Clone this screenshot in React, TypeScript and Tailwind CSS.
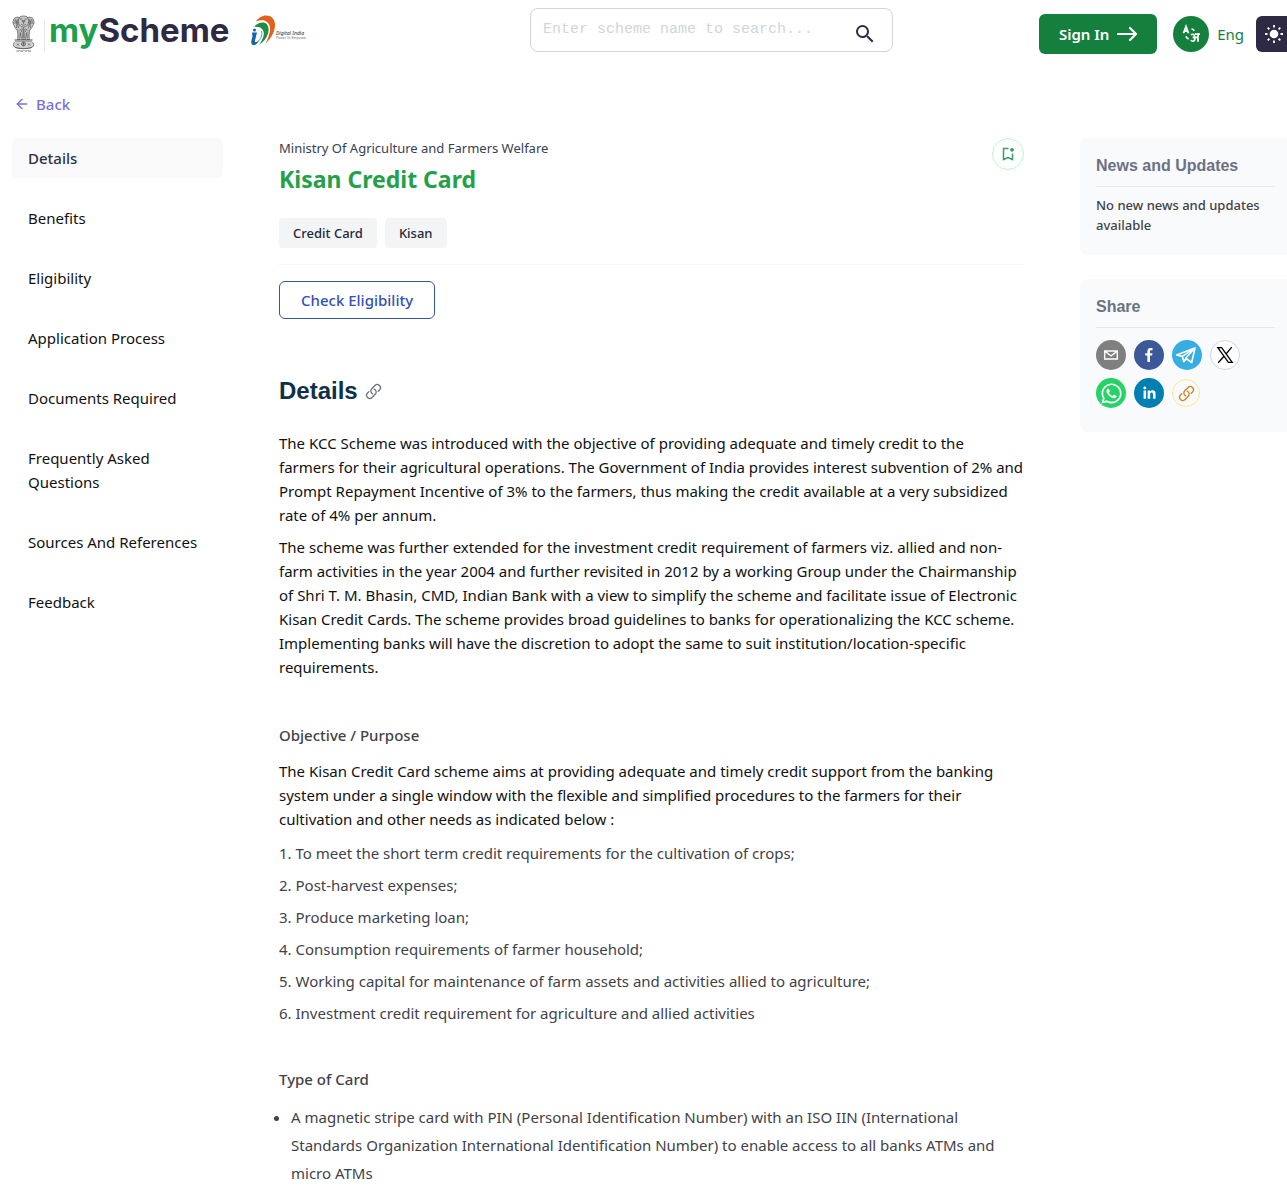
import type { ReactNode } from "react";
import { ArrowLeft } from "lucide-react";
import { MdSearch } from "react-icons/md";
import { FaWhatsapp } from "react-icons/fa6";
import { HiOutlineLink } from "react-icons/hi2";

function Emblem() {
  return (
    <svg viewBox="0 0 46 76" className="h-[38px] w-[23px]" fill="none" stroke="#4a4a4a" strokeWidth="1.3" role="img" aria-label="National emblem">
      <path d="M15 5c1-4 15-4 16 0 5-2 11 0 12 5 2 4 1 9-2 12-1 5-4 7-7 8H12c-4-1-6-3-7-8-3-3-4-8-2-12 1-5 7-7 12-5z" fill="#c9c9c9" />
      <path d="M15 5c-3 5-3 12 1 17M31 5c3 5 3 12-1 17M16 8h5m4 0h5M19 12h8M21 10l2 7 2-7M18 18c3 3 7 3 10 0M17 22c4 3 8 3 12 0M4 12h5m-6 4h7M42 12h-5m6 4h-7M7 8c3 6 3 12 2 18M39 8c-3 6-3 12-2 18M12 7c-2 7-1 14 2 20M34 7c2 7 1 14-2 20" />
      <path d="M10 29c2 7 2 14 1 20h5l1-14 2 14h8l2-14 1 14h5c-1-6-1-13 1-20M20 27l1 20M26 27l-1 20M23 25v22M14 30v17M32 30v17M17 28l2 6M29 28l-2 6" fill="#dedede" />
      <path d="M5 50h36M6 54h34" strokeWidth="2" />
      <path d="M5 54c-3 3-3 8 0 10 6 4 30 4 36 0 3-2 3-7 0-10" fill="#d2d2d2" />
      <circle cx="23" cy="58" r="4" />
      <path d="M23 54v8M19 58h8M10 57l4 4m-4 0 4-4M32 57l4 4m-4 0 4-4M6 65c8 3 26 3 34 0" />
      <path d="M9 73h5m2 0h6m4 0h4m2 0h6M9 71h29" strokeWidth="1.2" stroke="#8a8a8a" />
    </svg>
  );
}

function DigitalIndia() {
  return (
    <svg viewBox="0 0 110 64" className="h-8 w-[55px] shrink-0" role="img" aria-label="Digital India, Power To Empower">
      <path d="M10 13C17 1 34-3 43 6c10 10 5 34-14 51 9-17 13-34 4-42-6-6-15-5-23-2z" fill="#e2611d" />
      <path d="M6 24c7-9 20-12 26-5 8 10 1 30-16 41 8-11 13-24 7-31-4-5-11-6-17-5z" fill="#1d8f43" />
      <circle cx="7" cy="30" r="3" fill="#1e5aa8" />
      <path d="M2 35h10L8 51c-1 4 2 5 8-1-2 8-10 13-14 9-3-3-1-9 1-16z" fill="#1565ab" />
      <path d="M15 52c6-6 8-14 6-20" stroke="#3b9bd4" strokeWidth="2" fill="none" />
      <text x="50" y="40" fontSize="10" fontStyle="italic" fontWeight="500" fill="#444444" className="font-['Noto_Sans',sans-serif]">Digital India</text>
      <text x="50" y="47" fontSize="7" fill="#777777" className="font-['Liberation_Sans',sans-serif]">Power To Empower</text>
    </svg>
  );
}

function TranslateIcon() {
  return (
    <svg viewBox="0 0 20 20" className="size-5" fill="none" stroke="#ffffff" strokeWidth="1.8">
      <path d="M2.500 9.200 5 2.500l2.500 6.700M3.400 7h3.300" />
      <path d="M10.500 5c1.300 0 2.200.6 2.600 1.900M5.200 12c.1 1.600 1 2.600 2.600 2.800" strokeWidth="1.600" />
      <path d="M10 11c.8-1.200 3.500-1 3.500.9 0 1.100-1 1.500-1.900 1.500 1.400 0 2.400.7 2.300 2-.1 2-3.300 2.200-4 .6M13.500 13.300h3.500M14 10.200h5M17 10.200v7.600" strokeWidth="1.700" />
    </svg>
  );
}

function SunIcon() {
  return (
    <svg viewBox="0 0 18 18" className="size-[18px]" stroke="currentColor" strokeWidth="1.800" fill="none">
      <circle cx="9" cy="9" r="4.300" fill="currentColor" stroke="none" />
      <path d="M9 0v2.500M9 15.500V18M0 9h2.500M15.500 9H18M2.700 2.700l1.700 1.700M13.600 13.600l1.700 1.700M2.700 15.300l1.700-1.700M13.600 4.400l1.700-1.700" />
    </svg>
  );
}

const navItems = [
  "Details", "Benefits", "Eligibility", "Application Process", "Documents Required",
  "Frequently Asked Questions", "Sources And References", "Feedback",
];

const purposes = [
  "To meet the short term credit requirements for the cultivation of crops;",
  "Post-harvest expenses;",
  "Produce marketing loan;",
  "Consumption requirements of farmer household;",
  "Working capital for maintenance of farm assets and activities allied to agriculture;",
  "Investment credit requirement for agriculture and allied activities",
];

function Glyph({ children }: { children: ReactNode }) {
  return <svg viewBox="0 0 64 64" className="size-full" fill="#ffffff">{children}</svg>;
}

const round = "flex size-[30px] items-center justify-center rounded-full";

function ShareCard() {
  return (
    <section className="rounded-l-lg bg-[#f9fafc] pt-4 pr-3 pb-6 pl-4">
      <h2 className="border-b border-gray-200 pb-2 font-['Liberation_Sans',sans-serif] text-base font-bold text-gray-500">Share</h2>
      <div className="mt-3 flex w-[152px] flex-wrap gap-2">
        <button aria-label="Share by email" className={`${round} bg-[#7f7f7f]`}>
          <Glyph><path fillRule="evenodd" d="M17 22v20h30V22H17zm24.100 3L32 32.100 22.900 25h18.200zM20 39V26.600l12 9.300 12-9.300V39H20z" /></Glyph>
        </button>
        <button aria-label="Share on Facebook" className={`${round} bg-[#3b5998]`}>
          <Glyph><path d="M34.100,47V33.300h4.600l0.700-5.300h-5.300v-3.400c0-1.500,0.400-2.600,2.600-2.600l2.800,0v-4.800c-0.500-0.100-2.200-0.200-4.100-0.200c-4.100,0-6.900,2.500-6.900,7V28H24v5.300h4.500V47H34.100z" /></Glyph>
        </button>
        <button aria-label="Share on Telegram" className={`${round} bg-[#37aee2]`}>
          <Glyph>
            <path d="M10 32 49 17 42 48 31 40 25 46 22 35Z" fill="none" stroke="#ffffff" strokeWidth="3.500" strokeLinejoin="round" />
            <path d="M22 35 48 18 29 39M25 46l5-7" fill="none" stroke="#ffffff" strokeWidth="3" />
          </Glyph>
        </button>
        <button aria-label="Share on X" className={`${round} border border-gray-300 bg-white text-black`}>
          <svg viewBox="0 0 18 18" className="size-[18px]" fill="none" stroke="currentColor" strokeWidth="1.300">
            <path d="M1.800 1.700h3.800l10.600 14.600h-3.800zM15.800 1.200 10 8M8 10.300 2.200 16.800" />
          </svg>
        </button>
        <button aria-label="Share on WhatsApp" className={`${round} bg-[#25d366] text-white`}>
          <FaWhatsapp size={23} />
        </button>
        <button aria-label="Share on LinkedIn" className={`${round} bg-[#007fb1]`}>
          <Glyph><path d="M20.400,44h5.400V26.600h-5.400V44z M23.100,18c-1.700,0-3.100,1.400-3.100,3.100c0,1.700,1.400,3.100,3.100,3.100c1.700,0,3.100-1.400,3.100-3.100C26.200,19.400,24.800,18,23.100,18z M39.500,26.200c-2.600,0-4.400,1.400-5.100,2.800h-0.100v-2.400h-5.200V44h5.400v-8.600c0-2.300,0.400-4.500,3.200-4.500c2.800,0,2.800,2.600,2.800,4.600V44H46v-9.500C46,29.800,45,26.200,39.500,26.200z" /></Glyph>
        </button>
        <button aria-label="Copy link" className="mt-px flex size-7 items-center justify-center rounded-full border border-amber-200 text-[#d0802b]">
          <HiOutlineLink size={17} strokeWidth={1.9} />
        </button>
      </div>
    </section>
  );
}

export default function App() {
  return (
    <div className="min-h-screen overflow-x-hidden bg-white font-['Noto_Sans',sans-serif] text-[15px] leading-6 text-[#111111]">
      <header className="grid grid-cols-[1fr_363px_394px] pt-2">
        <div className="flex items-start pl-3">
          <div className="mt-[7px] flex">
            <Emblem />
            <span className="mt-1 ml-[9px] h-8 w-px bg-gray-200" />
          </div>
          <a href="#home" className="ml-1 font-['Inter',sans-serif] text-[33px] leading-[44px] font-bold text-[#2f2a44]">
            <span className="text-[#1ca04c]">my</span>Scheme
          </a>
          <div className="mt-[7px] ml-[22px]"><DigitalIndia /></div>
        </div>
        <div className="flex h-11 items-center rounded-lg border border-gray-300 pr-[15px] pl-3">
          <input
            type="text"
            aria-label="Search schemes"
            placeholder="Enter scheme name to search..."
            className="min-w-0 flex-1 font-['Liberation_Mono',monospace] text-[15px] outline-none placeholder:text-gray-300"
          />
          <button aria-label="Search" className="mt-2 text-[#2f2a44]"><MdSearch size={24} /></button>
        </div>
        <div className="flex items-start justify-end">
          <button className="mt-[6px] flex h-10 w-[118px] items-center justify-center gap-2 rounded-md bg-[#15803d] font-semibold text-white">
            Sign In
            <svg viewBox="0 0 20 16" className="h-4 w-5" fill="none" stroke="currentColor" strokeWidth="2.200" strokeLinecap="round" strokeLinejoin="round">
              <path d="M1 8h18M13 2l6 6-6 6" />
            </svg>
          </button>
          <button className="mt-2 ml-4 flex items-center gap-2 text-[#15803d]">
            <span className="flex size-9 items-center justify-center rounded-full bg-[#15803d]"><TranslateIcon /></span>
            Eng
          </button>
          <button aria-label="Toggle theme" className="mt-2 ml-3 flex h-9 w-[31px] items-center justify-center rounded-l-md bg-[#2f2a44] pl-1 text-white">
            <SunIcon />
          </button>
        </div>
      </header>

      <a href="#back" className="mt-[38px] ml-[14px] inline-flex items-center gap-[6px] font-medium text-[#7a6fd6]">
        <ArrowLeft size={16} strokeWidth={2} />
        Back
      </a>

      <div className="mt-5 grid grid-cols-[211px_1fr_207px] gap-14 pl-3">
        <nav className="flex flex-col gap-5">
          {navItems.map((item, i) => (
            <a key={item} href="#section" className={i === 0 ? "rounded-md bg-[#f9f9f9] px-4 py-2 font-medium text-[#2f3040]" : "px-4 py-2"}>
              {item}
            </a>
          ))}
        </nav>

        <main className="min-w-0">
          <div className="flex items-start justify-between border-b border-gray-100 pb-4">
            <div>
              <p className="text-[13px] leading-5 text-gray-700">Ministry Of Agriculture and Farmers Welfare</p>
              <h1 className="mt-[5px] text-[23px] leading-8 font-bold text-[#24a148]">Kisan Credit Card</h1>
              <div className="mt-[23px] flex gap-2 text-[13px] leading-5 font-medium text-gray-800">
                <span className="rounded-sm bg-gray-100 px-[14px] py-[5px]">Credit Card</span>
                <span className="rounded-sm bg-gray-100 px-[14px] py-[5px]">Kisan</span>
              </div>
            </div>
            <button aria-label="Bookmark scheme" className="flex size-8 items-center justify-center rounded-full border border-green-200 text-[#3a9c62]">
              <svg viewBox="0 0 16 16" className="size-4" fill="none" stroke="currentColor" strokeWidth="1.500">
                <path d="M8.500 2.500H3.500v11L8 11.500l4.500 2V7.500" />
                <circle cx="12" cy="3.800" r="1.900" fill="currentColor" stroke="none" />
              </svg>
            </button>
          </div>
          <button className="mt-4 h-[38px] rounded-md border border-[#2f55a4] px-[21px] font-medium text-[#3450b5]">Check Eligibility</button>

          <h2 className="mt-14 flex items-center gap-[7px] font-['Liberation_Sans',sans-serif] text-2xl leading-8 font-bold text-[#0f2f4a]">
            Details
            <HiOutlineLink size={17} strokeWidth={1.9} className="text-gray-500" />
          </h2>
          <p className="mt-6">
            The KCC Scheme was introduced with the objective of providing adequate and timely credit to the<br />
            farmers for their agricultural operations. The Government of India provides interest subvention of 2% and Prompt Repayment Incentive of 3% to the farmers, thus making the credit available at a very subsidized rate of 4% per annum.
          </p>
          <p className="mt-2">
            The scheme was further extended for the investment credit requirement of farmers viz. allied and non-farm activities in the year 2004 and further revisited in 2012 by a working Group under the Chairmanship of Shri T. M. Bhasin, CMD, Indian Bank with a view to simplify the scheme and facilitate issue of Electronic Kisan Credit Cards. The scheme provides broad guidelines to banks for operationalizing the KCC scheme. Implementing banks will have the discretion to adopt the same to suit institution/location-specific requirements.
          </p>

          <h3 className="mt-11 font-medium text-[#3f4247]">Objective / Purpose</h3>
          <p className="mt-3">
            The Kisan Credit Card scheme aims at providing adequate and timely credit support from the banking system under a single window with the flexible and simplified procedures to the farmers for their cultivation and other needs as indicated below :
          </p>
          <ol className="mt-[10px] flex flex-col gap-2 text-[#3f4247]">
            {purposes.map((p, i) => <li key={p}>{i + 1}. {p}</li>)}
          </ol>

          <h3 className="mt-[42px] font-medium text-[#3f4247]">Type of Card</h3>
          <ul className="mt-3 list-disc pl-3 leading-7 text-[#3f4247]">
            <li>
              A magnetic stripe card with PIN (Personal Identification Number) with an ISO IIN (International Standards Organization International Identification Number) to enable access to all banks ATMs and micro ATMs
            </li>
          </ul>
        </main>

        <aside className="flex flex-col gap-6">
          <section className="rounded-l-lg bg-[#f9fafc] pt-4 pr-3 pb-5 pl-4">
            <h2 className="border-b border-gray-200 pb-2 font-['Liberation_Sans',sans-serif] text-base font-bold text-gray-500">News and Updates</h2>
            <p className="mt-2 text-[13px] leading-5 font-medium text-[#3f4247]">No new news and updates available</p>
          </section>
          <ShareCard />
        </aside>
      </div>
    </div>
  );
}
